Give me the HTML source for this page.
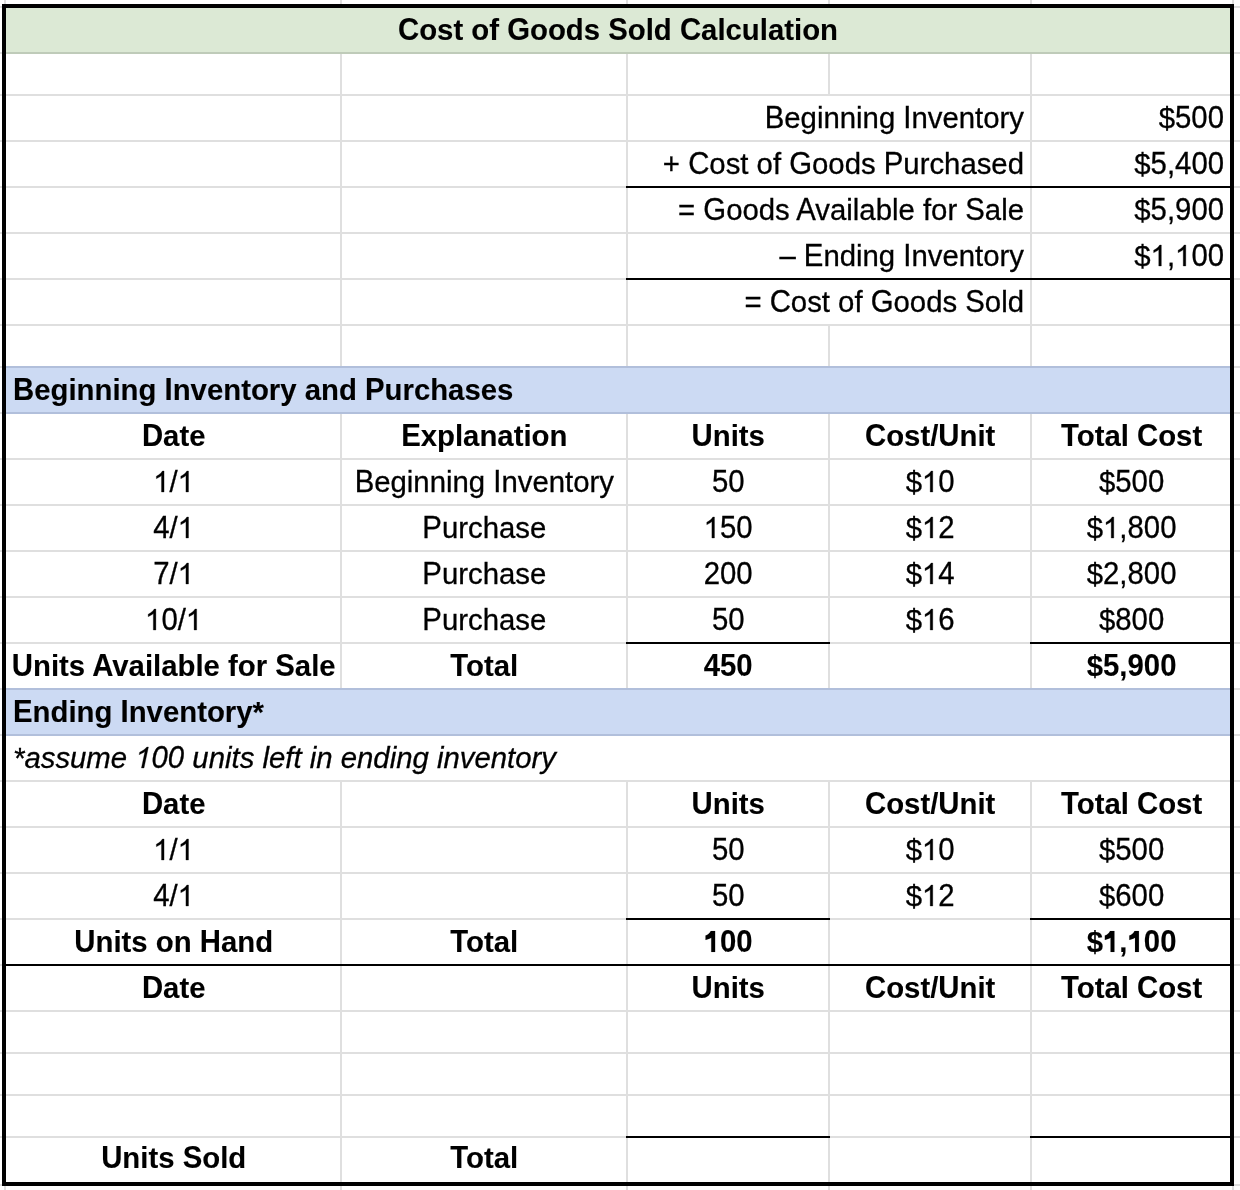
<!DOCTYPE html><html><head><meta charset="utf-8"><style>html,body{margin:0;padding:0;background:#fff;width:1240px;height:1190px;overflow:hidden}svg{display:block;will-change:transform}text{font-family:"Liberation Sans",sans-serif;font-size:29.33px;fill:#000;stroke:#000;stroke-width:0.3px;shape-rendering:auto}.b{font-weight:bold;stroke-width:0.1px}.i{font-style:italic}.h{fill:none;stroke:none}path{shape-rendering:geometricPrecision}path.g{fill:#000;stroke:#000;stroke-width:0.3px}path.gb{fill:#000;stroke:#000;stroke-width:0.1px}</style></head><body>
<svg width="1240" height="1190" viewBox="0 0 1240 1190" shape-rendering="crispEdges">
<rect x="6" y="8" width="1224" height="44" fill="#dce9d5"/>
<rect x="6" y="366" width="1224" height="46" fill="#ccdaf3"/>
<rect x="6" y="688" width="1224" height="46" fill="#ccdaf3"/>
<rect x="6" y="52" width="1224" height="2" fill="#bfcbb9"/>
<rect x="6" y="366" width="1224" height="2" fill="#b1bfdb"/>
<rect x="6" y="412" width="1224" height="2" fill="#b1bfdb"/>
<rect x="6" y="688" width="1224" height="2" fill="#b1bfdb"/>
<rect x="6" y="734" width="1224" height="2" fill="#b1bfdb"/>
<rect x="6" y="94" width="1224" height="2" fill="#dfdfdf"/>
<rect x="6" y="140" width="1224" height="2" fill="#dfdfdf"/>
<rect x="6" y="186" width="1224" height="2" fill="#dfdfdf"/>
<rect x="6" y="232" width="1224" height="2" fill="#dfdfdf"/>
<rect x="6" y="278" width="1224" height="2" fill="#dfdfdf"/>
<rect x="6" y="324" width="1224" height="2" fill="#dfdfdf"/>
<rect x="6" y="458" width="1224" height="2" fill="#dfdfdf"/>
<rect x="6" y="504" width="1224" height="2" fill="#dfdfdf"/>
<rect x="6" y="550" width="1224" height="2" fill="#dfdfdf"/>
<rect x="6" y="596" width="1224" height="2" fill="#dfdfdf"/>
<rect x="6" y="642" width="1224" height="2" fill="#dfdfdf"/>
<rect x="6" y="780" width="1224" height="2" fill="#dfdfdf"/>
<rect x="6" y="826" width="1224" height="2" fill="#dfdfdf"/>
<rect x="6" y="872" width="1224" height="2" fill="#dfdfdf"/>
<rect x="6" y="918" width="1224" height="2" fill="#dfdfdf"/>
<rect x="6" y="1010" width="1224" height="2" fill="#dfdfdf"/>
<rect x="6" y="1052" width="1224" height="2" fill="#dfdfdf"/>
<rect x="6" y="1094" width="1224" height="2" fill="#dfdfdf"/>
<rect x="6" y="1136" width="1224" height="2" fill="#dfdfdf"/>
<rect x="4" y="0" width="2" height="4" fill="#dfdfdf"/>
<rect x="4" y="1186" width="2" height="4" fill="#dfdfdf"/>
<rect x="340" y="0" width="2" height="4" fill="#dfdfdf"/>
<rect x="340" y="1186" width="2" height="4" fill="#dfdfdf"/>
<rect x="626" y="0" width="2" height="4" fill="#dfdfdf"/>
<rect x="626" y="1186" width="2" height="4" fill="#dfdfdf"/>
<rect x="828" y="0" width="2" height="4" fill="#dfdfdf"/>
<rect x="828" y="1186" width="2" height="4" fill="#dfdfdf"/>
<rect x="1030" y="0" width="2" height="4" fill="#dfdfdf"/>
<rect x="1030" y="1186" width="2" height="4" fill="#dfdfdf"/>
<rect x="1232" y="0" width="2" height="4" fill="#dfdfdf"/>
<rect x="1232" y="1186" width="2" height="4" fill="#dfdfdf"/>
<rect x="0" y="6" width="2" height="2" fill="#dfdfdf"/>
<rect x="1234" y="6" width="6" height="2" fill="#dfdfdf"/>
<rect x="0" y="52" width="2" height="2" fill="#dfdfdf"/>
<rect x="1234" y="52" width="6" height="2" fill="#dfdfdf"/>
<rect x="0" y="94" width="2" height="2" fill="#dfdfdf"/>
<rect x="1234" y="94" width="6" height="2" fill="#dfdfdf"/>
<rect x="0" y="140" width="2" height="2" fill="#dfdfdf"/>
<rect x="1234" y="140" width="6" height="2" fill="#dfdfdf"/>
<rect x="0" y="186" width="2" height="2" fill="#dfdfdf"/>
<rect x="1234" y="186" width="6" height="2" fill="#dfdfdf"/>
<rect x="0" y="232" width="2" height="2" fill="#dfdfdf"/>
<rect x="1234" y="232" width="6" height="2" fill="#dfdfdf"/>
<rect x="0" y="278" width="2" height="2" fill="#dfdfdf"/>
<rect x="1234" y="278" width="6" height="2" fill="#dfdfdf"/>
<rect x="0" y="324" width="2" height="2" fill="#dfdfdf"/>
<rect x="1234" y="324" width="6" height="2" fill="#dfdfdf"/>
<rect x="0" y="366" width="2" height="2" fill="#dfdfdf"/>
<rect x="1234" y="366" width="6" height="2" fill="#dfdfdf"/>
<rect x="0" y="412" width="2" height="2" fill="#dfdfdf"/>
<rect x="1234" y="412" width="6" height="2" fill="#dfdfdf"/>
<rect x="0" y="458" width="2" height="2" fill="#dfdfdf"/>
<rect x="1234" y="458" width="6" height="2" fill="#dfdfdf"/>
<rect x="0" y="504" width="2" height="2" fill="#dfdfdf"/>
<rect x="1234" y="504" width="6" height="2" fill="#dfdfdf"/>
<rect x="0" y="550" width="2" height="2" fill="#dfdfdf"/>
<rect x="1234" y="550" width="6" height="2" fill="#dfdfdf"/>
<rect x="0" y="596" width="2" height="2" fill="#dfdfdf"/>
<rect x="1234" y="596" width="6" height="2" fill="#dfdfdf"/>
<rect x="0" y="642" width="2" height="2" fill="#dfdfdf"/>
<rect x="1234" y="642" width="6" height="2" fill="#dfdfdf"/>
<rect x="0" y="688" width="2" height="2" fill="#dfdfdf"/>
<rect x="1234" y="688" width="6" height="2" fill="#dfdfdf"/>
<rect x="0" y="734" width="2" height="2" fill="#dfdfdf"/>
<rect x="1234" y="734" width="6" height="2" fill="#dfdfdf"/>
<rect x="0" y="780" width="2" height="2" fill="#dfdfdf"/>
<rect x="1234" y="780" width="6" height="2" fill="#dfdfdf"/>
<rect x="0" y="826" width="2" height="2" fill="#dfdfdf"/>
<rect x="1234" y="826" width="6" height="2" fill="#dfdfdf"/>
<rect x="0" y="872" width="2" height="2" fill="#dfdfdf"/>
<rect x="1234" y="872" width="6" height="2" fill="#dfdfdf"/>
<rect x="0" y="918" width="2" height="2" fill="#dfdfdf"/>
<rect x="1234" y="918" width="6" height="2" fill="#dfdfdf"/>
<rect x="0" y="964" width="2" height="2" fill="#dfdfdf"/>
<rect x="1234" y="964" width="6" height="2" fill="#dfdfdf"/>
<rect x="0" y="1010" width="2" height="2" fill="#dfdfdf"/>
<rect x="1234" y="1010" width="6" height="2" fill="#dfdfdf"/>
<rect x="0" y="1052" width="2" height="2" fill="#dfdfdf"/>
<rect x="1234" y="1052" width="6" height="2" fill="#dfdfdf"/>
<rect x="0" y="1094" width="2" height="2" fill="#dfdfdf"/>
<rect x="1234" y="1094" width="6" height="2" fill="#dfdfdf"/>
<rect x="0" y="1136" width="2" height="2" fill="#dfdfdf"/>
<rect x="1234" y="1136" width="6" height="2" fill="#dfdfdf"/>
<rect x="0" y="1184" width="2" height="2" fill="#dfdfdf"/>
<rect x="1234" y="1184" width="6" height="2" fill="#dfdfdf"/>
<rect x="340" y="54" width="2" height="312" fill="#dfdfdf"/>
<rect x="626" y="54" width="2" height="312" fill="#dfdfdf"/>
<rect x="1030" y="54" width="2" height="312" fill="#dfdfdf"/>
<rect x="828" y="54" width="2" height="40" fill="#dfdfdf"/>
<rect x="828" y="326" width="2" height="40" fill="#dfdfdf"/>
<rect x="340" y="414" width="2" height="274" fill="#dfdfdf"/>
<rect x="340" y="782" width="2" height="400" fill="#dfdfdf"/>
<rect x="626" y="414" width="2" height="274" fill="#dfdfdf"/>
<rect x="626" y="782" width="2" height="400" fill="#dfdfdf"/>
<rect x="828" y="414" width="2" height="274" fill="#dfdfdf"/>
<rect x="828" y="782" width="2" height="400" fill="#dfdfdf"/>
<rect x="1030" y="414" width="2" height="274" fill="#dfdfdf"/>
<rect x="1030" y="782" width="2" height="400" fill="#dfdfdf"/>
<rect x="626" y="186" width="604" height="2" fill="#000"/>
<rect x="626" y="278" width="604" height="2" fill="#000"/>
<rect x="626" y="642" width="204" height="2" fill="#000"/>
<rect x="1030" y="642" width="200" height="2" fill="#000"/>
<rect x="626" y="918" width="204" height="2" fill="#000"/>
<rect x="1030" y="918" width="200" height="2" fill="#000"/>
<rect x="626" y="1136" width="204" height="2" fill="#000"/>
<rect x="1030" y="1136" width="200" height="2" fill="#000"/>
<rect x="6" y="964" width="1224" height="2" fill="#000"/>
<rect x="2" y="4" width="1232" height="4" fill="#000"/>
<rect x="2" y="1182" width="1232" height="4" fill="#000"/>
<rect x="2" y="4" width="4" height="1182" fill="#000"/>
<rect x="1230" y="4" width="4" height="1182" fill="#000"/>
<text x="618" y="40" text-anchor="middle" class="b"><tspan class="h">C</tspan>ost of <tspan class="h">G</tspan>oods <tspan class="h">S</tspan>old <tspan class="h">C</tspan>alculation</text>
<text x="1024" y="128" text-anchor="end"><tspan class="h">B</tspan>eginning <tspan class="h">I</tspan>nventory</text>
<text x="1224" y="128" text-anchor="end">$<tspan class="h">5</tspan><tspan class="h">0</tspan><tspan class="h">0</tspan></text>
<text x="1024" y="174" text-anchor="end">+ <tspan class="h">C</tspan>ost of <tspan class="h">G</tspan>oods <tspan class="h">P</tspan>urchased</text>
<text x="1224" y="174" text-anchor="end">$<tspan class="h">5</tspan>,<tspan class="h">4</tspan><tspan class="h">0</tspan><tspan class="h">0</tspan></text>
<text x="1024" y="220" text-anchor="end">= <tspan class="h">G</tspan>oods <tspan class="h">A</tspan>vailable for <tspan class="h">S</tspan>ale</text>
<text x="1224" y="220" text-anchor="end">$<tspan class="h">5</tspan>,<tspan class="h">9</tspan><tspan class="h">0</tspan><tspan class="h">0</tspan></text>
<text x="1024" y="266" text-anchor="end">– <tspan class="h">E</tspan>nding <tspan class="h">I</tspan>nventory</text>
<text x="1224" y="266" text-anchor="end">$<tspan class="h">1</tspan>,<tspan class="h">1</tspan><tspan class="h">0</tspan><tspan class="h">0</tspan></text>
<text x="1024" y="312" text-anchor="end">= <tspan class="h">C</tspan>ost of <tspan class="h">G</tspan>oods <tspan class="h">S</tspan>old</text>
<text x="13" y="400" text-anchor="start" class="b"><tspan class="h">B</tspan>eginning <tspan class="h">I</tspan>nventory and <tspan class="h">P</tspan>urchases</text>
<text x="173.7" y="446" text-anchor="middle" class="b"><tspan class="h">D</tspan>ate</text>
<text x="484.3" y="446" text-anchor="middle" class="b"><tspan class="h">E</tspan>xplanation</text>
<text x="728.2" y="446" text-anchor="middle" class="b"><tspan class="h">U</tspan>nits</text>
<text x="930.2" y="446" text-anchor="middle" class="b"><tspan class="h">C</tspan>ost/<tspan class="h">U</tspan>nit</text>
<text x="1131.6" y="446" text-anchor="middle" class="b"><tspan class="h">T</tspan>otal <tspan class="h">C</tspan>ost</text>
<text x="173.7" y="492" text-anchor="middle"><tspan class="h">1</tspan>/<tspan class="h">1</tspan></text>
<text x="484.3" y="492" text-anchor="middle"><tspan class="h">B</tspan>eginning <tspan class="h">I</tspan>nventory</text>
<text x="728.2" y="492" text-anchor="middle"><tspan class="h">5</tspan><tspan class="h">0</tspan></text>
<text x="930.2" y="492" text-anchor="middle">$<tspan class="h">1</tspan><tspan class="h">0</tspan></text>
<text x="1131.6" y="492" text-anchor="middle">$<tspan class="h">5</tspan><tspan class="h">0</tspan><tspan class="h">0</tspan></text>
<text x="173.7" y="538" text-anchor="middle"><tspan class="h">4</tspan>/<tspan class="h">1</tspan></text>
<text x="484.3" y="538" text-anchor="middle"><tspan class="h">P</tspan>urchase</text>
<text x="728.2" y="538" text-anchor="middle"><tspan class="h">1</tspan><tspan class="h">5</tspan><tspan class="h">0</tspan></text>
<text x="930.2" y="538" text-anchor="middle">$<tspan class="h">1</tspan><tspan class="h">2</tspan></text>
<text x="1131.6" y="538" text-anchor="middle">$<tspan class="h">1</tspan>,<tspan class="h">8</tspan><tspan class="h">0</tspan><tspan class="h">0</tspan></text>
<text x="173.7" y="584" text-anchor="middle"><tspan class="h">7</tspan>/<tspan class="h">1</tspan></text>
<text x="484.3" y="584" text-anchor="middle"><tspan class="h">P</tspan>urchase</text>
<text x="728.2" y="584" text-anchor="middle"><tspan class="h">2</tspan><tspan class="h">0</tspan><tspan class="h">0</tspan></text>
<text x="930.2" y="584" text-anchor="middle">$<tspan class="h">1</tspan><tspan class="h">4</tspan></text>
<text x="1131.6" y="584" text-anchor="middle">$<tspan class="h">2</tspan>,<tspan class="h">8</tspan><tspan class="h">0</tspan><tspan class="h">0</tspan></text>
<text x="173.7" y="630" text-anchor="middle"><tspan class="h">1</tspan><tspan class="h">0</tspan>/<tspan class="h">1</tspan></text>
<text x="484.3" y="630" text-anchor="middle"><tspan class="h">P</tspan>urchase</text>
<text x="728.2" y="630" text-anchor="middle"><tspan class="h">5</tspan><tspan class="h">0</tspan></text>
<text x="930.2" y="630" text-anchor="middle">$<tspan class="h">1</tspan><tspan class="h">6</tspan></text>
<text x="1131.6" y="630" text-anchor="middle">$<tspan class="h">8</tspan><tspan class="h">0</tspan><tspan class="h">0</tspan></text>
<text x="173.7" y="676" text-anchor="middle" class="b"><tspan class="h">U</tspan>nits <tspan class="h">A</tspan>vailable for <tspan class="h">S</tspan>ale</text>
<text x="484.3" y="676" text-anchor="middle" class="b"><tspan class="h">T</tspan>otal</text>
<text x="728.2" y="676" text-anchor="middle" class="b"><tspan class="h">4</tspan><tspan class="h">5</tspan><tspan class="h">0</tspan></text>
<text x="1131.6" y="676" text-anchor="middle" class="b">$<tspan class="h">5</tspan>,<tspan class="h">9</tspan><tspan class="h">0</tspan><tspan class="h">0</tspan></text>
<text x="13" y="722" text-anchor="start" class="b"><tspan class="h">E</tspan>nding <tspan class="h">I</tspan>nventory*</text>
<text x="13" y="768" text-anchor="start" class="i">*assume <tspan class="h">1</tspan><tspan class="h">0</tspan><tspan class="h">0</tspan> units left in ending inventory</text>
<text x="173.7" y="814" text-anchor="middle" class="b"><tspan class="h">D</tspan>ate</text>
<text x="728.2" y="814" text-anchor="middle" class="b"><tspan class="h">U</tspan>nits</text>
<text x="930.2" y="814" text-anchor="middle" class="b"><tspan class="h">C</tspan>ost/<tspan class="h">U</tspan>nit</text>
<text x="1131.6" y="814" text-anchor="middle" class="b"><tspan class="h">T</tspan>otal <tspan class="h">C</tspan>ost</text>
<text x="173.7" y="860" text-anchor="middle"><tspan class="h">1</tspan>/<tspan class="h">1</tspan></text>
<text x="728.2" y="860" text-anchor="middle"><tspan class="h">5</tspan><tspan class="h">0</tspan></text>
<text x="930.2" y="860" text-anchor="middle">$<tspan class="h">1</tspan><tspan class="h">0</tspan></text>
<text x="1131.6" y="860" text-anchor="middle">$<tspan class="h">5</tspan><tspan class="h">0</tspan><tspan class="h">0</tspan></text>
<text x="173.7" y="906" text-anchor="middle"><tspan class="h">4</tspan>/<tspan class="h">1</tspan></text>
<text x="728.2" y="906" text-anchor="middle"><tspan class="h">5</tspan><tspan class="h">0</tspan></text>
<text x="930.2" y="906" text-anchor="middle">$<tspan class="h">1</tspan><tspan class="h">2</tspan></text>
<text x="1131.6" y="906" text-anchor="middle">$<tspan class="h">6</tspan><tspan class="h">0</tspan><tspan class="h">0</tspan></text>
<text x="173.7" y="952" text-anchor="middle" class="b"><tspan class="h">U</tspan>nits on <tspan class="h">H</tspan>and</text>
<text x="484.3" y="952" text-anchor="middle" class="b"><tspan class="h">T</tspan>otal</text>
<text x="728.2" y="952" text-anchor="middle" class="b"><tspan class="h">1</tspan><tspan class="h">0</tspan><tspan class="h">0</tspan></text>
<text x="1131.6" y="952" text-anchor="middle" class="b">$<tspan class="h">1</tspan>,<tspan class="h">1</tspan><tspan class="h">0</tspan><tspan class="h">0</tspan></text>
<text x="173.7" y="998" text-anchor="middle" class="b"><tspan class="h">D</tspan>ate</text>
<text x="728.2" y="998" text-anchor="middle" class="b"><tspan class="h">U</tspan>nits</text>
<text x="930.2" y="998" text-anchor="middle" class="b"><tspan class="h">C</tspan>ost/<tspan class="h">U</tspan>nit</text>
<text x="1131.6" y="998" text-anchor="middle" class="b"><tspan class="h">T</tspan>otal <tspan class="h">C</tspan>ost</text>
<text x="173.7" y="1168" text-anchor="middle" class="b"><tspan class="h">U</tspan>nits <tspan class="h">S</tspan>old</text>
<text x="484.3" y="1168" text-anchor="middle" class="b"><tspan class="h">T</tspan>otal</text>
<text x="398.03" y="40" class="b" transform="matrix(1 0 0 1.04 0 -1.600)">C</text>
<text x="507.17" y="40" class="b" transform="matrix(1 0 0 1.04 0 -1.600)">G</text>
<text x="608.19" y="40" class="b" transform="matrix(1 0 0 1.04 0 -1.600)">S</text>
<text x="679.88" y="40" class="b" transform="matrix(1 0 0 1.04 0 -1.600)">C</text>
<text x="764.75" y="128" transform="matrix(1 0 0 1.04 0 -5.120)">B</text>
<text x="903.34" y="128" transform="matrix(1 0 0 1.04 0 -5.120)">I</text>
<text x="1175.05" y="128" transform="matrix(1 0 0 1.04 0 -5.120)">5</text>
<text x="1191.36" y="128" transform="matrix(1 0 0 1.04 0 -5.120)">0</text>
<text x="1207.67" y="128" transform="matrix(1 0 0 1.04 0 -5.120)">0</text>
<text x="688.16" y="174" transform="matrix(1 0 0 1.04 0 -6.960)">C</text>
<text x="789.22" y="174" transform="matrix(1 0 0 1.04 0 -6.960)">G</text>
<text x="883.78" y="174" transform="matrix(1 0 0 1.04 0 -6.960)">P</text>
<text x="1150.59" y="174" transform="matrix(1 0 0 1.04 0 -6.960)">5</text>
<text x="1175.06" y="174" transform="matrix(1 0 0 1.04 0 -6.960)">4</text>
<text x="1191.38" y="174" transform="matrix(1 0 0 1.04 0 -6.960)">0</text>
<text x="1207.69" y="174" transform="matrix(1 0 0 1.04 0 -6.960)">0</text>
<text x="703.33" y="220" transform="matrix(1 0 0 1.04 0 -8.800)">G</text>
<text x="796.27" y="220" transform="matrix(1 0 0 1.04 0 -8.800)">A</text>
<text x="965.28" y="220" transform="matrix(1 0 0 1.04 0 -8.800)">S</text>
<text x="1150.59" y="220" transform="matrix(1 0 0 1.04 0 -8.800)">5</text>
<text x="1175.06" y="220" transform="matrix(1 0 0 1.04 0 -8.800)">9</text>
<text x="1191.38" y="220" transform="matrix(1 0 0 1.04 0 -8.800)">0</text>
<text x="1207.69" y="220" transform="matrix(1 0 0 1.04 0 -8.800)">0</text>
<text x="803.88" y="266" transform="matrix(1 0 0 1.04 0 -10.640)">E</text>
<text x="903.34" y="266" transform="matrix(1 0 0 1.04 0 -10.640)">I</text>
<path class="g" d="M1161.33 266.00L1158.76 266.00L1158.76 249.57C1158.14 250.16 1157.32 250.76 1156.32 251.35C1155.32 251.94 1154.42 252.38 1153.63 252.67L1153.63 250.17C1155.08 249.50 1156.34 248.67 1157.41 247.73C1158.48 246.77 1159.26 245.85 1159.70 245.00L1161.33 245.00Z"/>
<path class="g" d="M1185.80 266.00L1183.23 266.00L1183.23 249.57C1182.61 250.16 1181.79 250.76 1180.79 251.35C1179.79 251.94 1178.89 252.38 1178.10 252.67L1178.10 250.17C1179.55 249.50 1180.81 248.67 1181.88 247.73C1182.95 246.77 1183.73 245.85 1184.17 245.00L1185.80 245.00Z"/>
<text x="1191.38" y="266" transform="matrix(1 0 0 1.04 0 -10.640)">0</text>
<text x="1207.69" y="266" transform="matrix(1 0 0 1.04 0 -10.640)">0</text>
<text x="769.67" y="312" transform="matrix(1 0 0 1.04 0 -12.480)">C</text>
<text x="870.73" y="312" transform="matrix(1 0 0 1.04 0 -12.480)">G</text>
<text x="965.30" y="312" transform="matrix(1 0 0 1.04 0 -12.480)">S</text>
<text x="13.00" y="400" class="b" transform="matrix(1 0 0 1.04 0 -16.000)">B</text>
<text x="164.50" y="400" class="b" transform="matrix(1 0 0 1.04 0 -16.000)">I</text>
<text x="364.94" y="400" class="b" transform="matrix(1 0 0 1.04 0 -16.000)">P</text>
<text x="141.91" y="446" class="b" transform="matrix(1 0 0 1.04 0 -17.840)">D</text>
<text x="401.19" y="446" class="b" transform="matrix(1 0 0 1.04 0 -17.840)">E</text>
<text x="691.54" y="446" class="b" transform="matrix(1 0 0 1.04 0 -17.840)">U</text>
<text x="865.03" y="446" class="b" transform="matrix(1 0 0 1.04 0 -17.840)">C</text>
<text x="938.34" y="446" class="b" transform="matrix(1 0 0 1.04 0 -17.840)">U</text>
<text x="1061.00" y="446" class="b" transform="matrix(1 0 0 1.04 0 -17.840)">T</text>
<text x="1137.01" y="446" class="b" transform="matrix(1 0 0 1.04 0 -17.840)">C</text>
<path class="g" d="M164.05 492.00L161.47 492.00L161.47 475.57C160.86 476.16 160.04 476.76 159.04 477.35C158.04 477.94 157.13 478.38 156.35 478.67L156.35 476.17C157.79 475.50 159.05 474.67 160.13 473.73C161.20 472.77 161.97 471.85 162.42 471.00L164.05 471.00Z"/>
<path class="g" d="M188.50 492.00L185.93 492.00L185.93 475.57C185.31 476.16 184.49 476.76 183.49 477.35C182.49 477.94 181.59 478.38 180.80 478.67L180.80 476.17C182.25 475.50 183.51 474.67 184.58 473.73C185.65 472.77 186.43 471.85 186.87 471.00L188.50 471.00Z"/>
<text x="354.67" y="492" transform="matrix(1 0 0 1.04 0 -19.680)">B</text>
<text x="493.27" y="492" transform="matrix(1 0 0 1.04 0 -19.680)">I</text>
<text x="711.89" y="492" transform="matrix(1 0 0 1.04 0 -19.680)">5</text>
<text x="728.18" y="492" transform="matrix(1 0 0 1.04 0 -19.680)">0</text>
<path class="g" d="M932.77 492.00L930.19 492.00L930.19 475.57C929.58 476.16 928.76 476.76 927.76 477.35C926.75 477.94 925.85 478.38 925.06 478.67L925.06 476.17C926.51 475.50 927.77 474.67 928.85 473.73C929.92 472.77 930.69 471.85 931.14 471.00L932.77 471.00Z"/>
<text x="938.34" y="492" transform="matrix(1 0 0 1.04 0 -19.680)">0</text>
<text x="1115.27" y="492" transform="matrix(1 0 0 1.04 0 -19.680)">5</text>
<text x="1131.58" y="492" transform="matrix(1 0 0 1.04 0 -19.680)">0</text>
<text x="1147.90" y="492" transform="matrix(1 0 0 1.04 0 -19.680)">0</text>
<text x="153.31" y="538" transform="matrix(1 0 0 1.04 0 -21.520)">4</text>
<path class="g" d="M188.50 538.00L185.93 538.00L185.93 521.57C185.31 522.16 184.49 522.76 183.49 523.35C182.49 523.94 181.59 524.38 180.80 524.67L180.80 522.17C182.25 521.50 183.51 520.67 184.58 519.73C185.65 518.77 186.43 517.85 186.87 517.00L188.50 517.00Z"/>
<text x="422.35" y="538" transform="matrix(1 0 0 1.04 0 -21.520)">P</text>
<path class="g" d="M714.47 538.00L711.89 538.00L711.89 521.57C711.28 522.16 710.46 522.76 709.46 523.35C708.46 523.94 707.56 524.38 706.77 524.67L706.77 522.17C708.21 521.50 709.47 520.67 710.55 519.73C711.62 518.77 712.40 517.85 712.84 517.00L714.47 517.00Z"/>
<text x="720.03" y="538" transform="matrix(1 0 0 1.04 0 -21.520)">5</text>
<text x="736.34" y="538" transform="matrix(1 0 0 1.04 0 -21.520)">0</text>
<path class="g" d="M932.77 538.00L930.19 538.00L930.19 521.57C929.58 522.16 928.76 522.76 927.76 523.35C926.75 523.94 925.85 524.38 925.06 524.67L925.06 522.17C926.51 521.50 927.77 520.67 928.85 519.73C929.92 518.77 930.69 517.85 931.14 517.00L932.77 517.00Z"/>
<text x="938.34" y="538" transform="matrix(1 0 0 1.04 0 -21.520)">2</text>
<path class="g" d="M1113.79 538.00L1111.21 538.00L1111.21 521.57C1110.59 522.16 1109.78 522.76 1108.77 523.35C1107.77 523.94 1106.87 524.38 1106.08 524.67L1106.08 522.17C1107.53 521.50 1108.79 520.67 1109.86 519.73C1110.94 518.77 1111.71 517.85 1112.15 517.00L1113.79 517.00Z"/>
<text x="1127.51" y="538" transform="matrix(1 0 0 1.04 0 -21.520)">8</text>
<text x="1143.83" y="538" transform="matrix(1 0 0 1.04 0 -21.520)">0</text>
<text x="1160.14" y="538" transform="matrix(1 0 0 1.04 0 -21.520)">0</text>
<text x="153.31" y="584" transform="matrix(1 0 0 1.04 0 -23.360)">7</text>
<path class="g" d="M188.50 584.00L185.93 584.00L185.93 567.57C185.31 568.16 184.49 568.76 183.49 569.35C182.49 569.94 181.59 570.38 180.80 570.67L180.80 568.17C182.25 567.50 183.51 566.67 184.58 565.73C185.65 564.77 186.43 563.85 186.87 563.00L188.50 563.00Z"/>
<text x="422.35" y="584" transform="matrix(1 0 0 1.04 0 -23.360)">P</text>
<text x="703.73" y="584" transform="matrix(1 0 0 1.04 0 -23.360)">2</text>
<text x="720.03" y="584" transform="matrix(1 0 0 1.04 0 -23.360)">0</text>
<text x="736.34" y="584" transform="matrix(1 0 0 1.04 0 -23.360)">0</text>
<path class="g" d="M932.77 584.00L930.19 584.00L930.19 567.57C929.58 568.16 928.76 568.76 927.76 569.35C926.75 569.94 925.85 570.38 925.06 570.67L925.06 568.17C926.51 567.50 927.77 566.67 928.85 565.73C929.92 564.77 930.69 563.85 931.14 563.00L932.77 563.00Z"/>
<text x="938.34" y="584" transform="matrix(1 0 0 1.04 0 -23.360)">4</text>
<text x="1103.05" y="584" transform="matrix(1 0 0 1.04 0 -23.360)">2</text>
<text x="1127.51" y="584" transform="matrix(1 0 0 1.04 0 -23.360)">8</text>
<text x="1143.83" y="584" transform="matrix(1 0 0 1.04 0 -23.360)">0</text>
<text x="1160.14" y="584" transform="matrix(1 0 0 1.04 0 -23.360)">0</text>
<path class="g" d="M155.89 630.00L153.32 630.00L153.32 613.57C152.70 614.16 151.88 614.76 150.88 615.35C149.88 615.94 148.98 616.38 148.19 616.67L148.19 614.17C149.64 613.50 150.90 612.67 151.97 611.73C153.04 610.77 153.82 609.85 154.26 609.00L155.89 609.00Z"/>
<text x="161.45" y="630" transform="matrix(1 0 0 1.04 0 -25.200)">0</text>
<path class="g" d="M196.66 630.00L194.08 630.00L194.08 613.57C193.47 614.16 192.65 614.76 191.65 615.35C190.64 615.94 189.74 616.38 188.95 616.67L188.95 614.17C190.40 613.50 191.66 612.67 192.74 611.73C193.81 610.77 194.58 609.85 195.03 609.00L196.66 609.00Z"/>
<text x="422.35" y="630" transform="matrix(1 0 0 1.04 0 -25.200)">P</text>
<text x="711.89" y="630" transform="matrix(1 0 0 1.04 0 -25.200)">5</text>
<text x="728.18" y="630" transform="matrix(1 0 0 1.04 0 -25.200)">0</text>
<path class="g" d="M932.77 630.00L930.19 630.00L930.19 613.57C929.58 614.16 928.76 614.76 927.76 615.35C926.75 615.94 925.85 616.38 925.06 616.67L925.06 614.17C926.51 613.50 927.77 612.67 928.85 611.73C929.92 610.77 930.69 609.85 931.14 609.00L932.77 609.00Z"/>
<text x="938.34" y="630" transform="matrix(1 0 0 1.04 0 -25.200)">6</text>
<text x="1115.27" y="630" transform="matrix(1 0 0 1.04 0 -25.200)">8</text>
<text x="1131.58" y="630" transform="matrix(1 0 0 1.04 0 -25.200)">0</text>
<text x="1147.90" y="630" transform="matrix(1 0 0 1.04 0 -25.200)">0</text>
<text x="11.79" y="676" class="b" transform="matrix(1 0 0 1.04 0 -27.040)">U</text>
<text x="92.17" y="676" class="b" transform="matrix(1 0 0 1.04 0 -27.040)">A</text>
<text x="275.25" y="676" class="b" transform="matrix(1 0 0 1.04 0 -27.040)">S</text>
<text x="450.35" y="676" class="b" transform="matrix(1 0 0 1.04 0 -27.040)">T</text>
<text x="703.73" y="676" class="b" transform="matrix(1 0 0 1.04 0 -27.040)">4</text>
<text x="720.03" y="676" class="b" transform="matrix(1 0 0 1.04 0 -27.040)">5</text>
<text x="736.34" y="676" class="b" transform="matrix(1 0 0 1.04 0 -27.040)">0</text>
<text x="1103.05" y="676" class="b" transform="matrix(1 0 0 1.04 0 -27.040)">5</text>
<text x="1127.51" y="676" class="b" transform="matrix(1 0 0 1.04 0 -27.040)">9</text>
<text x="1143.83" y="676" class="b" transform="matrix(1 0 0 1.04 0 -27.040)">0</text>
<text x="1160.14" y="676" class="b" transform="matrix(1 0 0 1.04 0 -27.040)">0</text>
<text x="13.00" y="722" class="b" transform="matrix(1 0 0 1.04 0 -28.880)">E</text>
<text x="120.52" y="722" class="b" transform="matrix(1 0 0 1.04 0 -28.880)">I</text>
<path class="g" d="M143.99 768.00L141.41 768.00L144.90 751.57C144.16 752.16 143.22 752.76 142.09 753.35C140.96 753.94 139.96 754.38 139.12 754.67L139.65 752.17C141.24 751.50 142.67 750.67 143.95 749.73C145.23 748.77 146.19 747.85 146.82 747.00L148.45 747.00Z"/>
<text x="151.56" y="768" class="i" transform="matrix(1 0 0 1.04 0 -30.720)">0</text>
<text x="167.86" y="768" class="i" transform="matrix(1 0 0 1.04 0 -30.720)">0</text>
<text x="141.91" y="814" class="b" transform="matrix(1 0 0 1.04 0 -32.560)">D</text>
<text x="691.54" y="814" class="b" transform="matrix(1 0 0 1.04 0 -32.560)">U</text>
<text x="865.03" y="814" class="b" transform="matrix(1 0 0 1.04 0 -32.560)">C</text>
<text x="938.34" y="814" class="b" transform="matrix(1 0 0 1.04 0 -32.560)">U</text>
<text x="1061.00" y="814" class="b" transform="matrix(1 0 0 1.04 0 -32.560)">T</text>
<text x="1137.01" y="814" class="b" transform="matrix(1 0 0 1.04 0 -32.560)">C</text>
<path class="g" d="M164.05 860.00L161.47 860.00L161.47 843.57C160.86 844.16 160.04 844.76 159.04 845.35C158.04 845.94 157.13 846.38 156.35 846.67L156.35 844.17C157.79 843.50 159.05 842.67 160.13 841.73C161.20 840.77 161.97 839.85 162.42 839.00L164.05 839.00Z"/>
<path class="g" d="M188.50 860.00L185.93 860.00L185.93 843.57C185.31 844.16 184.49 844.76 183.49 845.35C182.49 845.94 181.59 846.38 180.80 846.67L180.80 844.17C182.25 843.50 183.51 842.67 184.58 841.73C185.65 840.77 186.43 839.85 186.87 839.00L188.50 839.00Z"/>
<text x="711.89" y="860" transform="matrix(1 0 0 1.04 0 -34.400)">5</text>
<text x="728.18" y="860" transform="matrix(1 0 0 1.04 0 -34.400)">0</text>
<path class="g" d="M932.77 860.00L930.19 860.00L930.19 843.57C929.58 844.16 928.76 844.76 927.76 845.35C926.75 845.94 925.85 846.38 925.06 846.67L925.06 844.17C926.51 843.50 927.77 842.67 928.85 841.73C929.92 840.77 930.69 839.85 931.14 839.00L932.77 839.00Z"/>
<text x="938.34" y="860" transform="matrix(1 0 0 1.04 0 -34.400)">0</text>
<text x="1115.27" y="860" transform="matrix(1 0 0 1.04 0 -34.400)">5</text>
<text x="1131.58" y="860" transform="matrix(1 0 0 1.04 0 -34.400)">0</text>
<text x="1147.90" y="860" transform="matrix(1 0 0 1.04 0 -34.400)">0</text>
<text x="153.31" y="906" transform="matrix(1 0 0 1.04 0 -36.240)">4</text>
<path class="g" d="M188.50 906.00L185.93 906.00L185.93 889.57C185.31 890.16 184.49 890.76 183.49 891.35C182.49 891.94 181.59 892.38 180.80 892.67L180.80 890.17C182.25 889.50 183.51 888.67 184.58 887.73C185.65 886.77 186.43 885.85 186.87 885.00L188.50 885.00Z"/>
<text x="711.89" y="906" transform="matrix(1 0 0 1.04 0 -36.240)">5</text>
<text x="728.18" y="906" transform="matrix(1 0 0 1.04 0 -36.240)">0</text>
<path class="g" d="M932.77 906.00L930.19 906.00L930.19 889.57C929.58 890.16 928.76 890.76 927.76 891.35C926.75 891.94 925.85 892.38 925.06 892.67L925.06 890.17C926.51 889.50 927.77 888.67 928.85 887.73C929.92 886.77 930.69 885.85 931.14 885.00L932.77 885.00Z"/>
<text x="938.34" y="906" transform="matrix(1 0 0 1.04 0 -36.240)">2</text>
<text x="1115.27" y="906" transform="matrix(1 0 0 1.04 0 -36.240)">6</text>
<text x="1131.58" y="906" transform="matrix(1 0 0 1.04 0 -36.240)">0</text>
<text x="1147.90" y="906" transform="matrix(1 0 0 1.04 0 -36.240)">0</text>
<text x="74.31" y="952" class="b" transform="matrix(1 0 0 1.04 0 -38.080)">U</text>
<text x="199.75" y="952" class="b" transform="matrix(1 0 0 1.04 0 -38.080)">H</text>
<text x="450.35" y="952" class="b" transform="matrix(1 0 0 1.04 0 -38.080)">T</text>
<path class="gb" d="M715.12 952.00L711.25 952.00L711.25 937.68C709.75 938.61 707.74 939.47 705.52 939.90L705.52 935.53C707.45 934.89 709.46 933.53 710.75 931.00L715.12 931.00Z"/>
<text x="720.03" y="952" class="b" transform="matrix(1 0 0 1.04 0 -38.080)">0</text>
<text x="736.34" y="952" class="b" transform="matrix(1 0 0 1.04 0 -38.080)">0</text>
<path class="gb" d="M1114.43 952.00L1110.56 952.00L1110.56 937.68C1109.06 938.61 1107.06 939.47 1104.84 939.90L1104.84 935.53C1106.77 934.89 1108.77 933.53 1110.06 931.00L1114.43 931.00Z"/>
<path class="gb" d="M1138.90 952.00L1135.03 952.00L1135.03 937.68C1133.53 938.61 1131.52 939.47 1129.30 939.90L1129.30 935.53C1131.24 934.89 1133.24 933.53 1134.53 931.00L1138.90 931.00Z"/>
<text x="1143.83" y="952" class="b" transform="matrix(1 0 0 1.04 0 -38.080)">0</text>
<text x="1160.14" y="952" class="b" transform="matrix(1 0 0 1.04 0 -38.080)">0</text>
<text x="141.91" y="998" class="b" transform="matrix(1 0 0 1.04 0 -39.920)">D</text>
<text x="691.54" y="998" class="b" transform="matrix(1 0 0 1.04 0 -39.920)">U</text>
<text x="865.03" y="998" class="b" transform="matrix(1 0 0 1.04 0 -39.920)">C</text>
<text x="938.34" y="998" class="b" transform="matrix(1 0 0 1.04 0 -39.920)">U</text>
<text x="1061.00" y="998" class="b" transform="matrix(1 0 0 1.04 0 -39.920)">T</text>
<text x="1137.01" y="998" class="b" transform="matrix(1 0 0 1.04 0 -39.920)">C</text>
<text x="101.19" y="1168" class="b" transform="matrix(1 0 0 1.04 0 -46.720)">U</text>
<text x="182.65" y="1168" class="b" transform="matrix(1 0 0 1.04 0 -46.720)">S</text>
<text x="450.35" y="1168" class="b" transform="matrix(1 0 0 1.04 0 -46.720)">T</text>
</svg></body></html>
